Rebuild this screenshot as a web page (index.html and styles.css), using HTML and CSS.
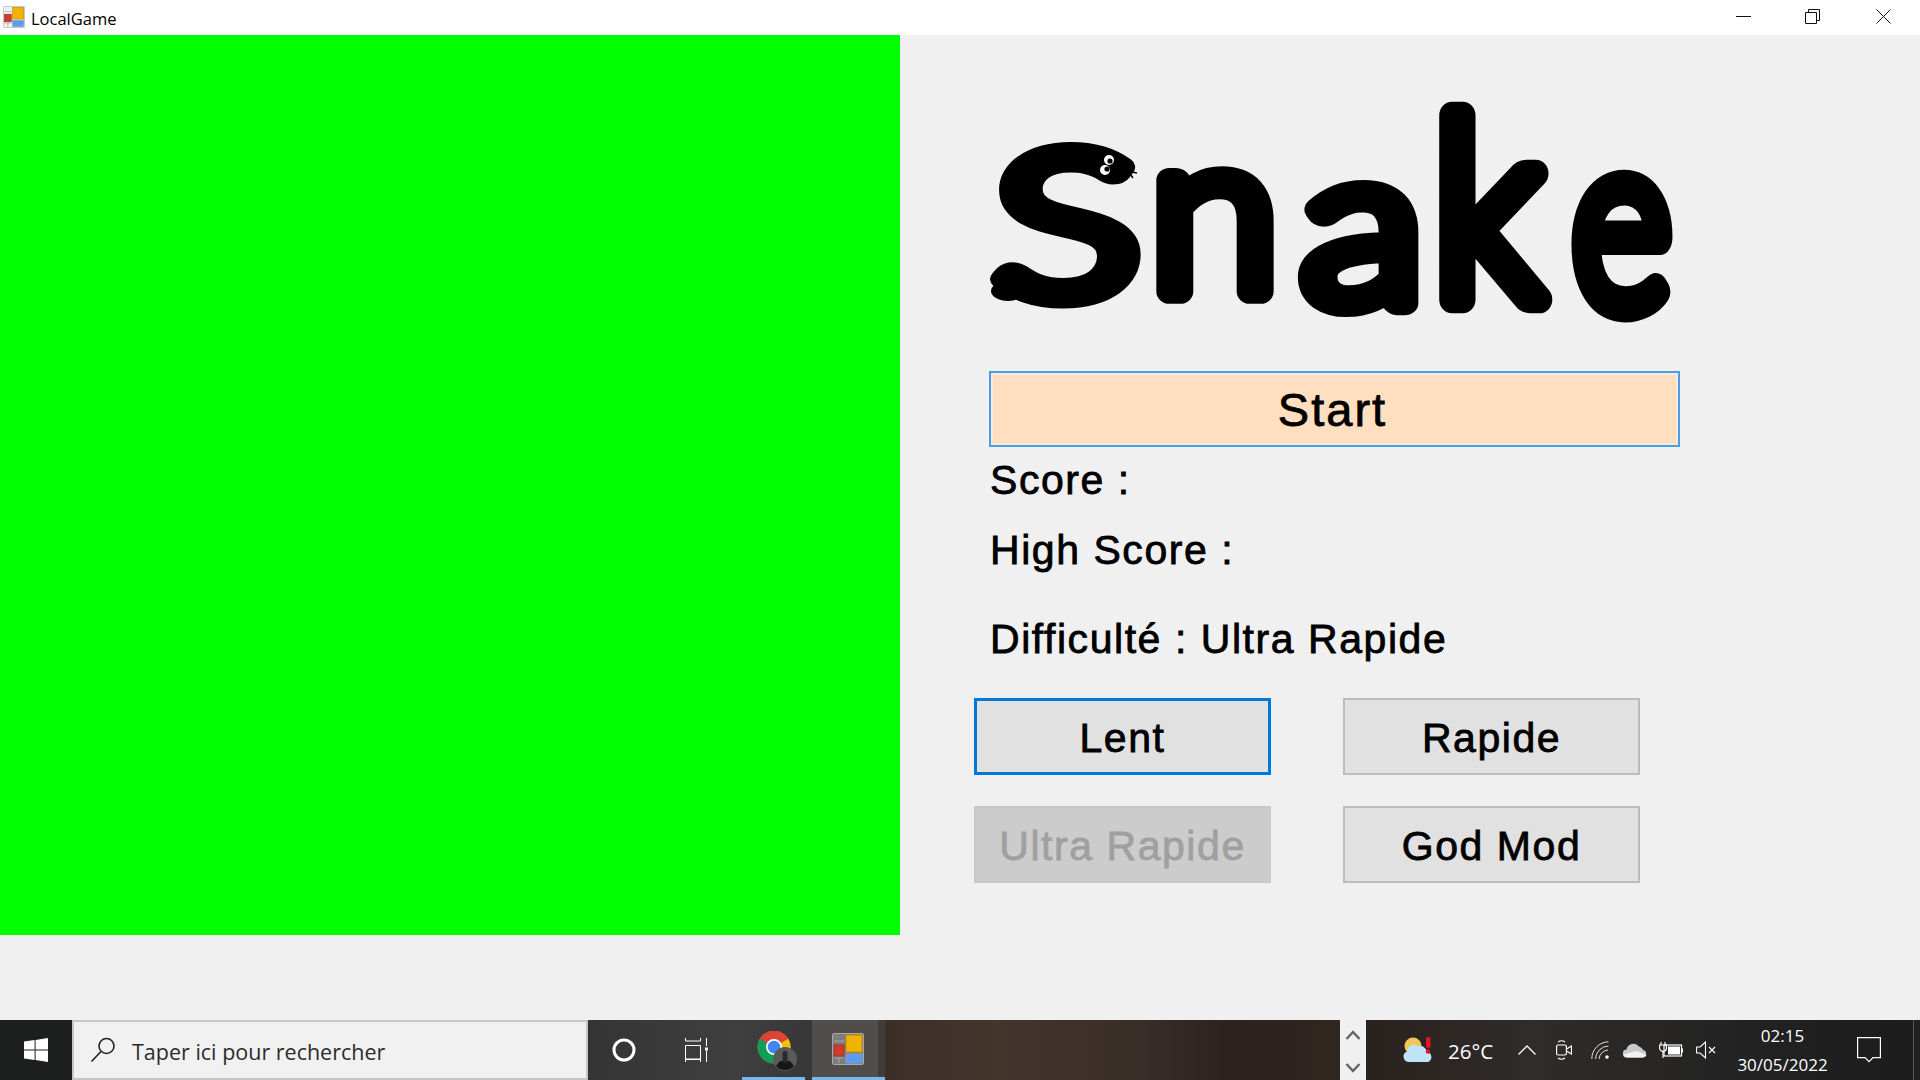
FILE: index.html
```html
<!DOCTYPE html>
<html lang="fr">
<head>
    <meta charset="UTF-8">
    <title>LocalGame</title>
    <link rel="stylesheet" href="styles.css">
</head>
<body>
    <svg class="defs" width="0" height="0">
        <symbol id="appIcon" viewBox="0 0 32 32">
            <rect x="0.5" y="0.5" width="31" height="31" rx="1.5" fill="#d8d8d8" fill-opacity=".35" stroke="#a8a8a8"/>
            <rect x="14" y="2" width="16" height="17" fill="#f0b400" stroke="#c58c10"/>
            <rect x="14" y="21" width="16" height="9" fill="#5b9cf0" stroke="#7aa0d0"/>
            <rect x="2" y="12" width="10" height="11" fill="#d23a30" stroke="#a5352c"/>
            <path d="M2 8h10M2 25h10M7 25v5" stroke="#a8a8a8" fill="none"/>
        </symbol>
    </svg>

    <div class="window">
        <div class="titlebar">
            <svg class="title-icon" width="22" height="22"><use href="#appIcon"/></svg>
            <span class="title-text">LocalGame</span>
            <div class="window-buttons">
                <svg class="win-btn" width="15" height="15" viewBox="0 0 15 15"><path d="M0 7.5h15" stroke="#111"/></svg>
                <svg class="win-btn" width="15" height="15" viewBox="0 0 15 15"><path d="M.5 3.5h11v11H.5zM3.5 3V.5h11v11H12" fill="none" stroke="#111"/></svg>
                <svg class="win-btn" width="15" height="15" viewBox="0 0 15 15"><path d="M.5.5l14 14M14.5.5l-14 14" stroke="#111"/></svg>
            </div>
        </div>

        <div class="main">
            <div class="board"></div>
            <div class="panel">
                <svg class="logo" width="720" height="270" viewBox="960 80 720 270" role="img" aria-label="Snake">
                    <g class="logo-letters">
                        <text transform="translate(993 296) scale(1.38 1)">S</text>
                        <text transform="translate(1150 292) scale(1.17 1.12)">n</text>
                        <text transform="translate(1301 303) scale(1.27 1.1)">a</text>
                        <text transform="translate(1433 300) scale(1.15 1.26)">k</text>
                        <text transform="translate(1572 307) scale(.95 1.23)">e</text>
                    </g>
                    <ellipse cx="1008" cy="291" rx="17" ry="10"/>
                    <ellipse class="eye" cx="1109" cy="160" rx="5" ry="5"/>
                    <ellipse class="eye" cx="1105" cy="170" rx="5" ry="5"/>
                    <circle cx="1110" cy="161" r="2.6"/>
                    <circle cx="1107" cy="169" r="2.6"/>
                    <path class="tongue" d="M1122 170l15 3M1128 171l5 7"/>
                </svg>

                <button class="start-btn">Start</button>
                <div class="label label-score">Score :</div>
                <div class="label label-high">High Score :</div>
                <div class="label label-level">Difficulté : Ultra Rapide</div>

                <div class="levels">
                    <button class="level-btn focused">Lent</button>
                    <button class="level-btn">Rapide</button>
                    <button class="level-btn" disabled>Ultra Rapide</button>
                    <button class="level-btn">God Mod</button>
                </div>
            </div>
        </div>
    </div>

    <div class="taskbar">
        <div class="start-menu">
            <svg width="24" height="24" viewBox="0 0 24 24" fill="#fff">
                <path d="M0 3.6l10.6-1.5v9.4H0zM11.6 2L24 0v11.5H11.6zM0 12.5h10.6v9.4L0 20.4zM11.6 12.5H24V24l-12.4-2z"/>
            </svg>
        </div>
        <div class="search">
            <svg class="search-icon" width="26" height="26" viewBox="0 0 26 26" fill="none" stroke="#222" stroke-width="1.6">
                <circle cx="16.5" cy="9" r="7.5"/>
                <path d="M11 14.5L1.5 24.5"/>
            </svg>
            <span class="search-text">Taper ici pour rechercher</span>
        </div>
        <div class="task-items">
            <div class="task-slot">
                <svg width="26" height="26" viewBox="0 0 26 26" fill="none" stroke="#fff" stroke-width="3"><circle cx="13" cy="13" r="10"/></svg>
            </div>
            <div class="task-slot">
                <svg width="24" height="24" viewBox="0 0 24 24" fill="none" stroke="#fff">
                    <path d="M.5 0v3h15V0M.5 7.5h15v14H.5zM.5 24v-2.500M.5 21h15v3M21.500 0v8M21.500 13v11"/>
                    <rect x="20" y="9.500" width="3" height="3" fill="#fff" stroke="none"/>
                </svg>
            </div>
            <div class="task-slot task-chrome">
                <svg width="46" height="46" viewBox="0 0 46 46">
                    <circle cx="17" cy="16" r="16.500" fill="#db4437"/>
                    <path d="M17 16L2.700 7.800A16.500 16.500 0 0 0 17 32.500L31.300 24.200z" fill="#0f9d58"/>
                    <path d="M17 16L31.300 7.800 A16.500 16.500 0 0 1 31.300 24.200z" fill="#f4c20d"/>
                    <circle cx="17" cy="16" r="8" fill="#fff"/>
                    <circle cx="17" cy="16" r="6.300" fill="#4285f4"/>
                    <circle cx="28" cy="28" r="12" fill="#5a5a5a"/>
                    <path d="M19 35a12 12 0 0 0 18 0l-4-5h-10z" fill="#161616"/>
                    <rect x="25.500" y="20" width="5" height="12" rx="2.500" fill="#2a2a2a"/>
                </svg>
            </div>
            <div class="task-slot task-app">
                <svg width="32" height="32"><use href="#appIcon"/></svg>
            </div>
        </div>
        <div class="wallpaper"></div>
        <div class="scroll-arrows">
            <svg width="16" height="10" viewBox="0 0 16 10" fill="none" stroke="#666" stroke-width="2.500"><path d="M1.500 9L8 2l6.500 7"/></svg>
            <svg width="16" height="10" viewBox="0 0 16 10" fill="none" stroke="#666" stroke-width="2.500"><path d="M1.500 1L8 8l6.500-7"/></svg>
        </div>
        <div class="tray">
            <svg class="tray-weather" width="31" height="26" viewBox="0 0 31 26">
                <circle cx="10" cy="9" r="8.500" fill="#f3c557"/>
                <path d="M6 25a5.500 5.500 0 0 1-2-10.600A7 7 0 0 1 15 9a7.500 7.500 0 0 1 9 6 5.200 5.200 0 0 1 1 10z" fill="#bfe3f7"/>
                <rect x="23" y="0" width="4.500" height="11" rx="2" fill="#e81123"/>
                <circle cx="25" cy="14.500" r="2.200" fill="#e81123"/>
            </svg>
            <span class="tray-temp">26°C</span>
            <svg class="tray-chevron" width="18" height="10" viewBox="0 0 18 10" fill="none" stroke="#fff" stroke-width="1.300"><path d="M.500 9.500L9 1l8.500 8.500"/></svg>
            <svg class="tray-meet" width="16" height="22" viewBox="0 0 16 22" fill="none" stroke="#fff" stroke-width="1.200">
                <rect x=".6" y="6" width="9.800" height="10" rx="1.500"/>
                <path d="M10.500 10l5-3v8l-5-3M2 3q3.500-2.500 7 0M2 19q3.500 2.500 7 0"/>
            </svg>
            <svg class="tray-wifi" width="18" height="18" viewBox="0 0 18 18" fill="none" stroke="#fff" stroke-width="1">
                <path d="M.8 18A17 17 0 0 1 17.500.8M4.500 18A13.300 13.300 0 0 1 17.500 5M8 18A9.800 9.800 0 0 1 17 9" stroke-opacity=".85"/>
                <circle cx="16" cy="16" r="1.800" fill="#fff" stroke="none"/>
            </svg>
            <svg class="tray-cloud" width="24" height="16" viewBox="0 0 24 16">
                <path d="M4 15.500a4 4 0 0 1-.500-8A7 7 0 0 1 16 4.500a5.500 5.500 0 0 1 4 3.500 3.800 3.800 0 0 1 0 7.500z" fill="#c9c9c9"/>
                <path d="M4 15.500a3.800 3.800 0 0 1-3.500-3L14 9l9.500 4a3.800 3.800 0 0 1-3.500 2.500z" fill="#f2f2f2"/>
            </svg>
            <svg class="tray-battery" width="24" height="16" viewBox="0 0 24 16" fill="none" stroke="#fff" stroke-width="1.200">
                <rect x="5" y="3" width="17.500" height="11"/>
                <rect x="9" y="4.500" width="12" height="8" fill="#fff" stroke="none"/>
                <path d="M23.500 6.500v4M2 0v3M6 0v3M.6 3h6.800v3a3.400 3.400 0 0 1-6.800 0zM4 9.500V16"/>
            </svg>
            <svg class="tray-sound" width="20" height="18" viewBox="0 0 20 18" fill="none" stroke="#fff" stroke-width="1.100">
                <path d="M.6 6h3.500L9.500 1v16L4.100 12H.6zM13 6l6 6M19 6l-6 6"/>
            </svg>
            <div class="tray-clock">
                <div>02:15</div>
                <div>30/05/2022</div>
            </div>
            <svg class="tray-notify" width="24" height="26" viewBox="0 0 24 26" fill="none" stroke="#fff" stroke-width="1.200"><path d="M.6.6h22.800v20H16l-4 4-4-4H.6z"/></svg>
            <div class="tray-edge"></div>
        </div>
    </div>
</body>
</html>
```

FILE: styles.css
```css
html, body {
    margin: 0;
    padding: 0;
}
body {
    width: 1920px;
    height: 1080px;
    overflow: hidden;
    background-color: #f0f0f0;
    font-family: "Liberation Sans", Arial, sans-serif;
    display: flex;
    flex-direction: column;
}
.defs {
    position: absolute;
}
.window {
    flex: 1;
    display: flex;
    flex-direction: column;
}
.titlebar {
    height: 35px;
    background-color: #fff;
    display: flex;
    align-items: center;
    padding-left: 3px;
}
.title-icon {
    margin-top: -2px;
}
.title-text {
    margin-left: 6px;
    font-family: "Open Sans", sans-serif;
    font-size: 16.5px;
    color: #000;
    padding-top: 2px;
}
.window-buttons {
    margin-left: auto;
    display: flex;
    gap: 54px;
    padding-right: 29px;
    margin-top: -2px;
}
.win-btn {
    display: block;
}
.win-btn:last-child {
    margin-left: 2px;
}
.main {
    flex: 1;
    display: flex;
}
.board {
    width: 900px;
    height: 900px;
    background-color: #00ff00;
}
.panel {
    flex: 1;
    padding: 45px 0 0 89px;
}
.logo {
    display: block;
    margin-left: -29px;
    overflow: visible;
}
.logo-letters text {
    font-family: "Lato", sans-serif;
    font-weight: 300;
    font-size: 200px;
    stroke: #000;
    stroke-width: 22px;
    stroke-linejoin: round;
    stroke-linecap: round;
}
.eye {
    fill: #fff;
}
.tongue {
    fill: none;
    stroke: #000;
    stroke-width: 1.5;
}
button {
    font-family: "Liberation Sans", Arial, sans-serif;
    padding: 4px 0 0;
    box-sizing: border-box;
    -webkit-text-stroke: .8px currentColor;
}
.start-btn {
    display: block;
    width: 691px;
    height: 76px;
    margin-top: 21px;
    padding: 0 4px 0 0;
    background-color: #ffdfbf;
    border: 2px solid #4a9ee8;
    box-shadow: inset 0 0 0 2px #fbeadb;
    font-size: 47px;
    letter-spacing: 2px;
    color: #000;
}
.label {
    height: 50px;
    line-height: 50px;
    margin-left: 1px;
    font-size: 41px;
    letter-spacing: 1.55px;
    color: #000;
    -webkit-text-stroke: .8px #000;
}
.label-score {
    margin-top: 8px;
}
.label-high {
    margin-top: 20px;
}
.label-level {
    margin-top: 39px;
}
.levels {
    display: grid;
    grid-template-columns: 297px 297px;
    grid-auto-rows: 77px;
    column-gap: 72px;
    row-gap: 31px;
    margin: 34px 0 0 -15px;
}
.level-btn {
    background-color: #e1e1e1;
    border: 2px solid #bcbcbc;
    font-size: 41px;
    letter-spacing: 1.55px;
    color: #000;
}
.level-btn.focused {
    border: 3px solid #0078d7;
}
.level-btn:disabled {
    background-color: #cccccc;
    border-color: #c8c8c8;
    color: #a0a0a0;
}
.taskbar {
    height: 60px;
    display: flex;
    flex-shrink: 0;
}
.start-menu {
    width: 72px;
    background-color: #1d1f1e;
    display: flex;
    align-items: center;
    justify-content: center;
}
.search {
    width: 516px;
    box-sizing: border-box;
    background-color: #f1f1f1;
    border: 2px solid #c6c6c6;
    display: flex;
    align-items: center;
    padding-left: 16px;
}
.search-text {
    margin-left: 16px;
    padding-top: 3px;
    font-family: "Open Sans", sans-serif;
    font-size: 21.5px;
    color: #2b2b2b;
}
.task-items {
    width: 297px;
    display: flex;
    background: linear-gradient(90deg, #343434, #3f3f3f 50%, #2f2f2f);
}
.task-slot {
    display: flex;
    align-items: center;
    justify-content: center;
    box-sizing: border-box;
}
.task-slot:nth-child(1) {
    width: 72px;
}
.task-slot:nth-child(2) {
    width: 73px;
}
.task-chrome {
    width: 79px;
    border-bottom: 3px solid #76b9ed;
    border-image: linear-gradient(90deg, transparent 12.7%, #76b9ed 12.7%, #76b9ed 90%, transparent 90%) 1;
    padding: 10px 0 0 14px;
}
.task-app {
    width: 73px;
    padding-right: 2px;
    background: linear-gradient(90deg, #504d4a 90%, #403c39 90%);
    border-bottom: 3px solid #76b9ed;
}
.wallpaper {
    width: 455px;
    background: linear-gradient(90deg, #3d2f28, #43342c 25%, #3a2e29 55%, #2c221f 75%, #30261f);
}
.scroll-arrows {
    width: 26px;
    background-color: #f0f0f0;
    display: flex;
    flex-direction: column;
    align-items: center;
    justify-content: space-between;
    padding: 10px 0 7px;
    box-sizing: border-box;
}
.tray {
    flex: 1;
    display: flex;
    align-items: center;
    background: linear-gradient(90deg, #2a211e, #2f2c2a 30%, #222 70%, #1c1c1c);
    color: #fff;
    font-family: "Open Sans", sans-serif;
}
.tray svg {
    display: block;
    flex-shrink: 0;
}
.tray-weather {
    margin-left: 37px;
}
.tray-temp {
    margin-left: 14px;
    width: 44px;
    padding-top: 1px;
    font-size: 20.5px;
}
.tray-chevron {
    margin-left: 26px;
}
.tray-meet {
    margin-left: 20px;
}
.tray-wifi {
    margin-left: 19px;
}
.tray-cloud {
    margin-left: 14px;
}
.tray-battery {
    margin-left: 12px;
}
.tray-sound {
    margin-left: 13px;
}
.tray-clock {
    margin-left: 20px;
    width: 93px;
    text-align: center;
    font-size: 17px;
    line-height: 29px;
    white-space: nowrap;
}
.tray-notify {
    margin-left: 28px;
}
.tray-edge {
    margin-left: auto;
    width: 7px;
    height: 100%;
    background-color: #202020;
    border-left: 1px solid #555;
    box-sizing: border-box;
}
```
